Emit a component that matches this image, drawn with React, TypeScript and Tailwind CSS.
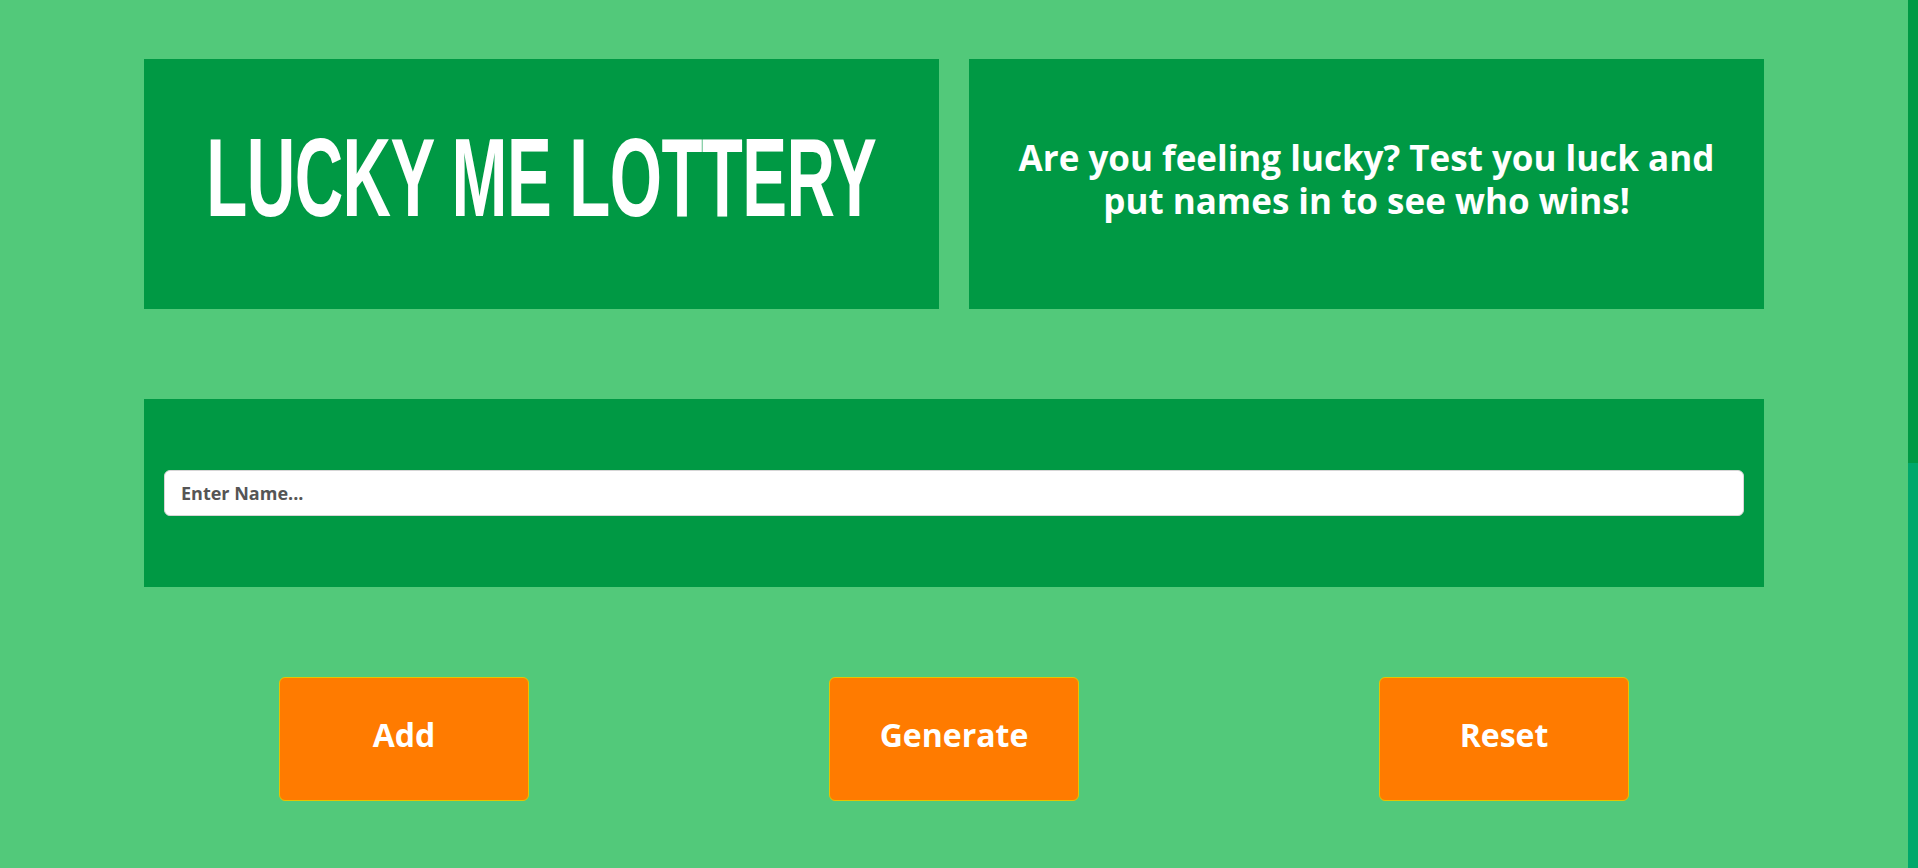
const buttons = ['Add', 'Generate', 'Reset'];

const App = () => {
  return (
    <div className="flex h-screen w-full overflow-hidden bg-[#52c97a]">
      <div className="flex-1 pt-[59px]" style={{ fontFamily: '"Open Sans", Lato, sans-serif' }}>
        {/* Header panels */}
        <div className="mx-auto flex w-[1620px] gap-[30px]">
          <div className="flex h-[250px] w-[795px] items-center justify-center overflow-hidden bg-[#009944] pb-[12px]">
            <h1
              className="origin-center scale-x-[0.6] whitespace-nowrap text-[112px] leading-none font-bold tracking-[-1px] text-white"
              style={{ fontFamily: '"Liberation Sans Narrow", "Liberation Sans", sans-serif' }}
            >
              LUCKY ME LOTTERY
            </h1>
          </div>
          <div className="flex h-[250px] w-[795px] items-center justify-center bg-[#009944] pb-[10px]">
            <p className="whitespace-nowrap text-center text-[35px] leading-[43px] font-bold text-white">
              Are you feeling lucky? Test you luck and
              <br />
              put names in to see who wins!
            </p>
          </div>
        </div>

        {/* Input panel */}
        <div className="mx-auto mt-[90px] flex h-[188px] w-[1620px] items-center bg-[#009944] px-5">
          <input
            type="text"
            placeholder="Enter Name..."
            className="h-[46px] w-full rounded-md border border-[#d6d6d6] bg-white px-4 text-[18px] font-bold text-[#555] outline-none placeholder:text-[#555]"
          />
        </div>

        {/* Buttons */}
        <div className="mt-[90px] flex justify-center gap-[300px]">
          {buttons.map((label) => (
            <button
              key={label}
              className="h-[124px] w-[250px] rounded-md border border-[#e8c400] bg-[#ff7b00] pb-[8px] text-[32px] font-bold text-white"
            >
              {label}
            </button>
          ))}
        </div>
      </div>

      {/* Scrollbar */}
      <div className="flex w-[10px] flex-col bg-[#00a86b]">
        <div className="h-[463px] bg-[#009944]" />
      </div>
    </div>
  );
};

export default App;
